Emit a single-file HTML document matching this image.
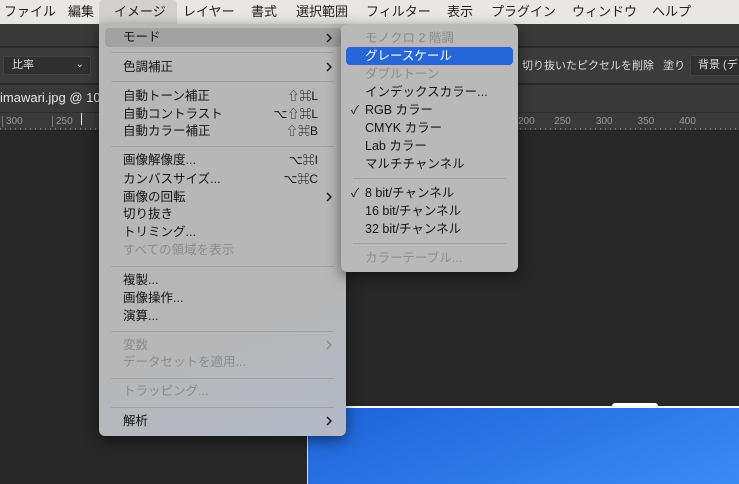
<!DOCTYPE html><html><head><meta charset="utf-8"><style>
*{margin:0;padding:0;box-sizing:border-box}
body{width:739px;height:484px;overflow:hidden;background:#272727;font-family:"Liberation Sans","Noto Sans CJK JP",sans-serif;position:relative}
.a{position:absolute;white-space:nowrap}
#mb{left:0;top:0;width:739px;height:24px;background:#e9e7e3;font-size:13px;color:#1e1e1e;line-height:15px}
#mb span{position:absolute;top:4px}
.menu{position:absolute;background:#b9b9b9;border-radius:6px;box-shadow:0 4px 14px rgba(0,0,0,.5);font-size:12.5px;color:#141414;line-height:15px}
.it{position:absolute;left:24px;white-space:nowrap}
.dis{color:#8b8b8b}
.sc{position:absolute;right:28px;font-size:12px}
.ar{position:absolute;right:14px;width:6px;height:10px}
.sep{position:absolute;left:12px;right:12px;height:1px;background:#a0a0a0}
</style></head><body>
<svg width="0" height="0" style="position:absolute"><defs><symbol id="chev" viewBox="0 0 6 10"><path d="M1 1 L5 5 L1 9" fill="none" stroke="currentColor" stroke-width="1.5"/></symbol></defs></svg>
<div class="a" id="mb">
<span style="left:4px">ファイル</span><span style="left:68px">編集</span>
<div class="a" style="left:99px;top:0;width:78px;height:24px;background:#d3d1cd;border-radius:4px 4px 0 0"></div>
<span style="left:114px">イメージ</span><span style="left:183px">レイヤー</span><span style="left:251px">書式</span><span style="left:296px">選択範囲</span><span style="left:366px">フィルター</span><span style="left:447px">表示</span><span style="left:491px">プラグイン</span><span style="left:572px">ウィンドウ</span><span style="left:652px">ヘルプ</span>
</div>
<div class="a" style="left:0;top:24px;width:739px;height:22px;background:#393939"></div>
<div class="a" style="left:0;top:47px;width:739px;height:36px;background:#3b3b3b;border-top:1px solid #2a2a2a"></div>
<div class="a" style="left:3px;top:56px;width:88px;height:19px;background:#2f2f2f;border:1px solid #444;border-radius:2px;color:#ddd;font-size:11px;padding:2px 8px;line-height:13px">比率<span style="position:absolute;right:6px;top:1px;font-size:10px">⌄</span></div>
<div class="a" style="left:522px;top:60px;color:#ddd;font-size:11px;line-height:13px">切り抜いたピクセルを削除&nbsp;&nbsp;&nbsp;塗り：</div>
<div class="a" style="left:690px;top:55px;width:60px;height:21px;background:#2f2f2f;border:1px solid #444;color:#ddd;font-size:11px;padding:3px 7px;line-height:13px">背景 (デフ</div>
<div class="a" style="left:0;top:84px;width:739px;height:28px;background:#393939;border-top:1px solid #2a2a2a"></div>
<div class="a" style="left:0;top:90px;color:#e6e6e6;font-size:13px;line-height:15px">imawari.jpg @ 100</div>
<div class="a" style="left:0;top:112px;width:739px;height:18px;background:#3a3a3a;border-top:1px solid #2c2c2c;background-image:repeating-linear-gradient(90deg,#777 0 1px,transparent 1px 5px);background-size:100% 3px;background-repeat:no-repeat;background-position:0 15px"></div>
<div class="a" style="left:2px;top:116px;color:#999;font-size:10px;border-left:1px solid #777;padding-left:3px;line-height:11px">300</div>
<div class="a" style="left:52px;top:116px;color:#999;font-size:10px;border-left:1px solid #777;padding-left:3px;line-height:11px">250</div>
<div class="a" style="left:81px;top:113px;width:1px;height:12px;background:#eee"></div>
<div class="a" style="left:518px;top:116px;color:#999;font-size:10px;line-height:11px">200 &nbsp;&nbsp;&nbsp;&nbsp;&nbsp;&nbsp;250 &nbsp;&nbsp;&nbsp;&nbsp;&nbsp;&nbsp;&nbsp;&nbsp;300 &nbsp;&nbsp;&nbsp;&nbsp;&nbsp;&nbsp;&nbsp;&nbsp;350 &nbsp;&nbsp;&nbsp;&nbsp;&nbsp;&nbsp;&nbsp;&nbsp;400</div>
<div class="a" style="left:0;top:130px;width:739px;height:1px;background:#1f1f1f"></div>
<div class="a" style="left:307px;top:140px;width:1px;height:344px;background:#ddd"></div>
<div class="a" style="left:308px;top:406px;width:431px;height:78px;background:linear-gradient(160deg,#1d62d8,#3b8bf5);border-top:2px solid #fff"></div>
<div class="a" style="left:612px;top:403px;width:46px;height:4px;background:#fff;border-radius:3px 3px 0 0"></div>

<div class="menu" style="left:99px;top:24px;width:247px;height:412px;border-radius:0 0 6px 6px;background:linear-gradient(160deg,#b7b7b7 70%,#b3b9c8)">
<div class="a" style="left:6px;top:4px;width:236px;height:19px;background:#a2a2a2;border-radius:4px"></div>
<div class="it" style="top:6px">モード</div><svg class="ar" style="top:9px"><use href="#chev"/></svg>
<div class="sep" style="top:28px"></div>
<div class="it" style="top:36px">色調補正</div><svg class="ar" style="top:38px"><use href="#chev"/></svg>
<div class="sep" style="top:57px"></div>
<div class="it" style="top:65px">自動トーン補正</div><div class="sc" style="top:65px">⇧⌘L</div>
<div class="it" style="top:83px">自動コントラスト</div><div class="sc" style="top:83px">⌥⇧⌘L</div>
<div class="it" style="top:100px">自動カラー補正</div><div class="sc" style="top:100px">⇧⌘B</div>
<div class="sep" style="top:122px"></div>
<div class="it" style="top:129px">画像解像度...</div><div class="sc" style="top:129px">⌥⌘I</div>
<div class="it" style="top:148px">カンバスサイズ...</div><div class="sc" style="top:148px">⌥⌘C</div>
<div class="it" style="top:166px">画像の回転</div><svg class="ar" style="top:168px"><use href="#chev"/></svg>
<div class="it" style="top:183px">切り抜き</div>
<div class="it" style="top:201px">トリミング...</div>
<div class="it dis" style="top:219px">すべての領域を表示</div>
<div class="sep" style="top:242px"></div>
<div class="it" style="top:249px">複製...</div>
<div class="it" style="top:267px">画像操作...</div>
<div class="it" style="top:285px">演算...</div>
<div class="sep" style="top:307px"></div>
<div class="it dis" style="top:314px">変数</div><svg class="ar dis" style="top:316px;color:#8b8b8b"><use href="#chev"/></svg>
<div class="it dis" style="top:331px">データセットを適用...</div>
<div class="sep" style="top:354px"></div>
<div class="it dis" style="top:360px">トラッピング...</div>
<div class="sep" style="top:383px"></div>
<div class="it" style="top:390px">解析</div><svg class="ar" style="top:392px"><use href="#chev"/></svg>
</div>

<div class="menu" style="left:341px;top:24px;width:177px;height:248px">
<div class="it dis" style="top:7px">モノクロ 2 階調</div>
<div class="a" style="left:5px;top:23px;width:167px;height:18px;background:#2566d9;border-radius:4px"></div>
<div class="it" style="top:25px;color:#fff">グレースケール</div>
<div class="it dis" style="top:43px">ダブルトーン</div>
<div class="it" style="top:61px">インデックスカラー...</div>
<div class="a" style="left:10px;top:79px;font-size:12px">✓</div>
<div class="it" style="top:79px">RGB カラー</div>
<div class="it" style="top:97px">CMYK カラー</div>
<div class="it" style="top:115px">Lab カラー</div>
<div class="it" style="top:133px">マルチチャンネル</div>
<div class="sep" style="top:154px"></div>
<div class="a" style="left:10px;top:162px;font-size:12px">✓</div>
<div class="it" style="top:162px">8 bit/チャンネル</div>
<div class="it" style="top:180px">16 bit/チャンネル</div>
<div class="it" style="top:198px">32 bit/チャンネル</div>
<div class="sep" style="top:219px"></div>
<div class="it dis" style="top:227px">カラーテーブル...</div>
</div>
</body></html>
